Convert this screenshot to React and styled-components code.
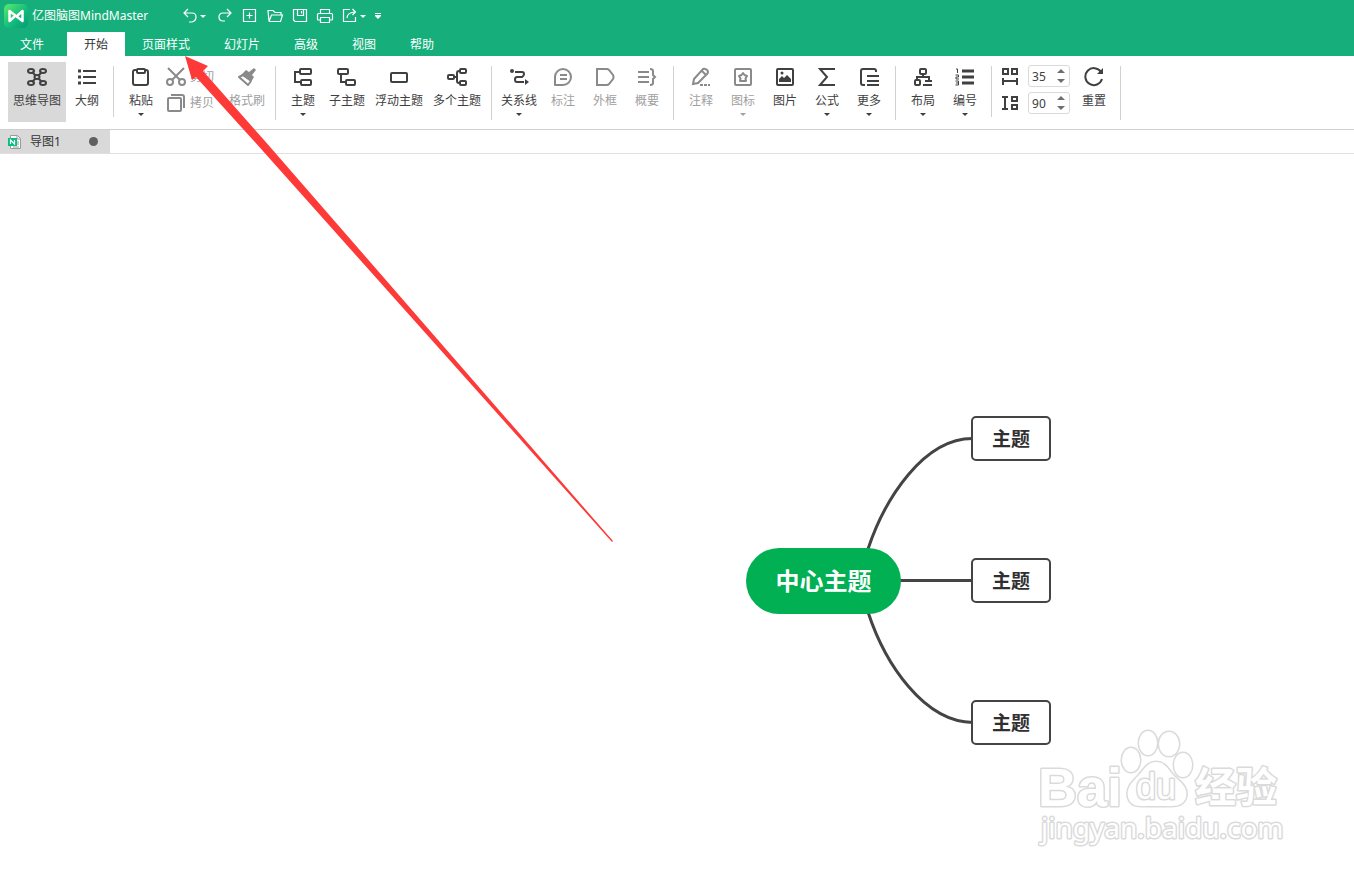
import React from "react";
import styled, { createGlobalStyle, css } from "styled-components";

const GlobalStyle = createGlobalStyle`
  * {
    box-sizing: border-box;
  }
  body {
    margin: 0;
    background: #ffffff;
    font-family: "Noto Sans", "Noto Sans CJK SC", sans-serif;
    font-size: 12px;
    line-height: 16px;
    color: #333333;
  }
  button, input {
    font: inherit;
    color: inherit;
    margin: 0;
    padding: 0;
    border: none;
    background: none;
  }
`;

const Window = styled.div`
  display: flex;
  flex-direction: column;
  min-height: 100vh;
  overflow: hidden;
`;

const Svg = styled.svg`
  display: block;
  flex: none;
  fill: none;
  stroke: currentColor;
  stroke-width: ${(p) => p.$weight || 2};
`;

/* title bar */
const TitleBar = styled.header`
  display: flex;
  align-items: center;
  height: 32px;
  padding-left: 4px;
  background: #16af7b;
  color: #ffffff;
`;

const AppName = styled.h1`
  flex: 0 0 148px;
  margin: 0 0 0 4px;
  font-size: 12px;
  font-weight: 400;
  line-height: 16px;
  white-space: nowrap;
`;

const QuickBar = styled.div`
  display: flex;
  align-items: center;
  gap: 5px;
`;

const QuickPair = styled.div`
  display: flex;
`;

const QuickButton = styled.button`
  display: flex;
  align-items: center;
  justify-content: ${(p) => (p.$narrow ? "flex-start" : "center")};
  width: ${(p) => (p.$narrow ? "10px" : "20px")};
  height: 20px;
`;

const Caret = styled.span`
  border: 3px solid transparent;
  border-top-color: currentColor;
  border-bottom: none;
`;

/* menu tabs */
const TabBar = styled.nav`
  display: flex;
  height: 24px;
  background: #16af7b;
`;

const Tab = styled.button`
  height: 24px;
  padding: 2px 17px 0;
  color: #ffffff;
  white-space: nowrap;
  ${(p) =>
    p.$file &&
    css`
      padding: 2px 20px 0;
      margin-right: 3px;
    `}
  ${(p) =>
    p.$active &&
    css`
      background: #ffffff;
      color: #333333;
    `}
`;

/* ribbon */
const Ribbon = styled.div`
  display: flex;
  height: 74px;
  padding: 6px 0 0 8px;
  border-bottom: 1px solid #d0d0d0;
`;

const Separator = styled.div`
  flex: none;
  width: 1px;
  height: ${(p) => (p.$short ? "51px" : "54px")};
  margin: 4px ${(p) => (p.$tight ? "4px" : "6px")} 0 5px;
  background: #d2d2d2;
`;

const Tool = styled.button`
  display: flex;
  flex: none;
  flex-direction: column;
  align-items: center;
  min-width: 42px;
  height: 60px;
  padding: 5px 5px 0;
  white-space: nowrap;
  background: ${(p) => (p.$active ? "#d9d9d9" : "transparent")};
  color: #404040;

  &:disabled {
    color: #8a8a8a;
  }
  &:disabled > span {
    color: #a0a0a0;
  }
`;

const ToolLabel = styled.span`
  margin: 6px 0 4px;
`;

const SmallTools = styled.div`
  display: flex;
  flex-direction: column;
  padding: 2px 10px 0 4px;
`;

const SmallTool = styled.button`
  display: flex;
  align-items: center;
  gap: 4px;
  height: 26px;
  white-space: nowrap;
  color: #8a8a8a;

  & > span {
    color: #a0a0a0;
  }
`;

const Spacing = styled.div`
  display: flex;
  flex-direction: column;
  gap: 5px;
  padding: 3px 3px 0 2px;
`;

const SpacingRow = styled.label`
  display: flex;
  align-items: center;
  gap: 8px;
  height: 22px;
  color: #404040;
`;

const Field = styled.span`
  display: flex;
  align-items: center;
  width: 42px;
  height: 22px;
  border: 1px solid #d9d9d9;
  border-radius: 3px;
`;

const FieldInput = styled.input`
  width: 28px;
  height: 20px;
  padding-left: 3px;
  outline: none;
`;

const Steps = styled.span`
  display: flex;
  flex-direction: column;
  justify-content: space-between;
  height: 16px;
  padding: 1px 0;
`;

const Step = styled.button`
  display: block;
  width: 8px;
  height: 4px;
  border: 4px solid transparent;
  border-top: ${(p) => (p.$up ? "none" : "4px solid #6e6e6e")};
  border-bottom: ${(p) => (p.$up ? "4px solid #6e6e6e" : "none")};
`;

/* document tabs */
const DocBar = styled.div`
  display: flex;
  height: 24px;
  border-bottom: 1px solid #e0e0e0;
`;

const DocTab = styled.button`
  display: flex;
  align-items: center;
  width: 110px;
  padding: 0 12px 0 7px;
  background: #d9d9d9;
`;

const DocName = styled.span`
  flex: 1;
  margin-left: 8px;
  text-align: left;
`;

const UnsavedDot = styled.span`
  width: 9px;
  height: 9px;
  border-radius: 50%;
  background: #606060;
`;

/* canvas */
const Canvas = styled.main`
  position: relative;
  flex: 1;
  min-height: 700px;
`;

const Links = styled.svg`
  position: absolute;
  left: 860px;
  top: 270px;
  fill: none;
  stroke: #444444;
  stroke-width: 3;
`;

const Node = styled.div`
  position: absolute;
  left: ${(p) => p.$x}px;
  top: ${(p) => p.$y}px;
  display: flex;
  align-items: center;
  justify-content: center;
  width: 80px;
  height: 45px;
  padding-bottom: 2px;
  border: 2px solid #444444;
  border-radius: 5px;
  background: #ffffff;
  color: #303030;
  font-family: "Noto Sans CJK SC", sans-serif;
  font-size: 19px;
  font-weight: 700;
`;

const CenterNode = styled(Node)`
  width: 155px;
  height: 66px;
  border: none;
  border-radius: 33px;
  background: #00b052;
  color: #ffffff;
  font-size: 24px;
`;

const Watermark = styled.svg`
  position: absolute;
  left: 1030px;
  top: 566px;
  fill: #ffffff;
  stroke: #dadada;
  stroke-width: 3;
  paint-order: stroke;
  stroke-linejoin: round;
`;

const Pointer = styled.svg`
  position: absolute;
  left: 180px;
  top: 50px;
  fill: #fd3a38;
  pointer-events: none;
`;

const icons = {
  mindmap: (
    <>
      <path d="M5 5L15 15M15 5L5 15" />
      <ellipse cx="4" cy="4" rx="3" ry="2" />
      <ellipse cx="16" cy="4" rx="3" ry="2" />
      <ellipse cx="4" cy="16" rx="3" ry="2" />
      <ellipse cx="16" cy="16" rx="3" ry="2" />
      <ellipse cx="10" cy="10" rx="2.500" ry="2" fill="#d9d9d9" />
    </>
  ),
  outline: (
    <>
      <path d="M6 4H19M6 10H19M6 16H19" />
      <path d="M1 4H4M1 10H4M1 16H4" strokeWidth="3" />
    </>
  ),
  paste: (
    <>
      <rect x="2" y="3" width="15" height="15" rx="2" />
      <rect x="6" y="2" width="8" height="4" rx="1" fill="#ffffff" />
    </>
  ),
  cut: (
    <>
      <circle cx="4" cy="15" r="3" />
      <circle cx="16" cy="15" r="3" />
      <path d="M2 1L14 13M18 1L6 13" />
    </>
  ),
  copy: (
    <>
      <rect x="2" y="5" width="13" height="13" rx="1" />
      <path d="M5 2H16Q18 2 18 4V15" />
    </>
  ),
  brush: (
    <>
      <path d="M6 8L2 10L11 18L14 14" strokeLinejoin="round" />
      <path d="M4 8L9 3L12 5L17 1L19 3L15 8L17 10L14 15Z" fill="currentColor" stroke="none" />
    </>
  ),
  topic: (
    <>
      <rect x="7" y="2" width="11" height="5" rx="1" />
      <rect x="8" y="13" width="10" height="5" rx="1" />
      <path d="M7 5H2V15H8" />
    </>
  ),
  subtopic: (
    <>
      <rect x="1" y="2" width="10" height="5" rx="1" />
      <rect x="9" y="13" width="9" height="5" rx="1" />
      <path d="M4 7V15H9" />
    </>
  ),
  floating: <rect x="2" y="6" width="16" height="9" rx="1" />,
  multi: (
    <>
      <rect x="1" y="8" width="6" height="4" rx="1" />
      <rect x="13" y="2" width="6" height="4" rx="1" />
      <rect x="13" y="14" width="6" height="4" rx="1" />
      <path d="M7 10H10M13 4H12Q10 4 10 6V14Q10 16 12 16H13" />
    </>
  ),
  relation: (
    <>
      <circle cx="3" cy="4" r="2" fill="currentColor" stroke="none" />
      <path d="M6 5H13Q15 5 15 7T13 10H8Q6 10 6 12.500T8 15H15" />
      <path d="M16 12L20 15L16 18Z" fill="currentColor" stroke="none" />
    </>
  ),
  callout: (
    <>
      <path d="M2 18V10A8 8 0 1 1 10 18Z" strokeLinejoin="round" />
      <path d="M7 8H14M7 12H14" />
    </>
  ),
  boundary: <path d="M2 2H12Q13 2 14 3L18 8Q19 10 18 12L14 17Q13 18 12 18H2Z" />,
  summary: (
    <path d="M1 5H12M1 10H12M1 15H12M13 2Q16 2 16 4V8L18 10L16 12V16Q16 18 13 18" />
  ),
  note: (
    <>
      <path d="M2 17L3 12L12 2Q14 1 16 3T16 7L7 16Z M11 4L15 8" />
      <path d="M9 18H19" strokeDasharray="3 1" />
    </>
  ),
  mark: (
    <>
      <rect x="2" y="2" width="16" height="16" rx="1" />
      <path d="M10 6L11.500 8L14 9L12.500 11.500L13 14H7L7.500 11.500L6 9L8.500 8Z" strokeLinejoin="round" />
    </>
  ),
  picture: (
    <>
      <rect x="2" y="2" width="16" height="16" rx="1" />
      <path d="M4 15V12L7 9L9 11L12 8L16 12V15Z" fill="currentColor" stroke="none" />
      <circle cx="7" cy="6" r="1.500" fill="currentColor" stroke="none" />
    </>
  ),
  formula: <path d="M18 2H3L10 10L3 18H18" />,
  more: <path d="M17 5V4Q17 2 15 2H4Q2 2 2 4V16Q2 18 4 18H6M8 9H20M8 14H20M8 18H20" />,
  layout: (
    <>
      <rect x="7" y="2" width="6" height="5" rx="1" />
      <rect x="2" y="13" width="5" height="5" rx="1" />
      <path d="M10 7V10M4 13V10H16V14M12 14H19M10 18H19" />
    </>
  ),
  numbering: (
    <>
      <path d="M7 4H19M7 10H19M7 16H19" strokeWidth="3" />
      <path d="M1 2H2.500V6M0.500 8H3.500V10H1V12H4M0.500 14H3.500V18H0.500M1 16H3" strokeWidth="1" />
    </>
  ),
  reset: (
    <>
      <path d="M17 5A8.500 8.500 0 1 0 18 12" />
      <path d="M19 1V7H13Z" fill="currentColor" stroke="none" />
    </>
  ),
  hgap: (
    <path d="M3 3H8V8H3ZM12 3H17V8H12ZM3 12V19M17 12V19M3 15H17" />
  ),
  vgap: (
    <path d="M12 4H17V8H12ZM12 12H17V16H12ZM2 4H8M2 16H8M5 4V16" />
  ),
};

const quick = {
  undo: <path d="M8 3L4 7L8 11M4 7H12Q16 7 16 11T12 16H9" />,
  redo: <path d="M12 3L16 7L12 11M16 7H8Q4 7 4 11T8 15H10" />,
  add: <path d="M3.500 3.500H15.500V15.500H3.500ZM6.500 9.500H12.500M9.500 6.500V12.500" />,
  open: <path d="M4 15.500L3 4.500H8L10 6.500H16V9M4 15.500H15.500L17.500 9H6.500L4 15.500" />,
  save: <path d="M4 3.500H16.500V15.500H5L3.500 14V3.500ZM7.500 3.500V9.500H13.500V3.500M11.500 5V7.500" />,
  print: <path d="M5.500 7V3.500H14.500V7M5.500 14H3.500Q2.500 14 2.500 13V8.500Q2.500 7.500 3.500 7.500H16.500Q17.500 7.500 17.500 8.500V13Q17.500 14 16.500 14H14.500M5.500 11.500H14.500V16.500H5.500Z" />,
  share: <path d="M10 3.500H3.500V15.500H15.500V11M7 12Q7 6.500 15.500 6M12.500 3L15.500 6L12.500 9" />,
};

const Icon = ({ name }) => (
  <Svg width="20" height="20" viewBox="0 0 20 20" aria-hidden="true">
    {icons[name]}
  </Svg>
);

const QuickIcon = ({ name }) => (
  <Svg $weight={1.2} width="20" height="20" viewBox="0 0 20 20" aria-hidden="true">
    {quick[name]}
  </Svg>
);

const ToolItem = ({ icon, label, menu, ...rest }) => (
  <Tool {...rest}>
    <Icon name={icon} />
    <ToolLabel>{label}</ToolLabel>
    {menu && <Caret />}
  </Tool>
);

const SpacingItem = ({ icon, label, value }) => (
  <SpacingRow>
    <Icon name={icon} />
    <Field>
      <FieldInput type="text" inputMode="numeric" aria-label={label} defaultValue={value} />
      <Steps>
        <Step $up aria-label="+" />
        <Step aria-label="-" />
      </Steps>
    </Field>
  </SpacingRow>
);

const tabs = ["开始", "页面样式", "幻灯片", "高级", "视图", "帮助"];

const topics = [262, 404, 546];

const App = () => {
  return (
    <Window>
      <GlobalStyle />
      <TitleBar>
        <svg width="24" height="24" viewBox="0 0 24 24" aria-hidden="true">
          <defs>
            <linearGradient id="logo" x1="0" y1="0" x2="1" y2="1">
              <stop offset="0" stopColor="#5bea6c" />
              <stop offset="0.6" stopColor="#10b97c" />
              <stop offset="1" stopColor="#079b73" />
            </linearGradient>
          </defs>
          <rect width="24" height="24" rx="5" fill="url(#logo)" />
          <path d="M10 13L5.500 17V7L18.500 17V7L14 11" fill="none" stroke="#ffffff" strokeWidth="2.500" strokeLinejoin="round" strokeLinecap="round" />
        </svg>
        <AppName>亿图脑图MindMaster</AppName>
        <QuickBar>
          <QuickPair>
            <QuickButton aria-label="撤销"><QuickIcon name="undo" /></QuickButton>
            <QuickButton $narrow aria-label="撤销列表"><Caret /></QuickButton>
          </QuickPair>
          <QuickButton aria-label="恢复"><QuickIcon name="redo" /></QuickButton>
          <QuickButton aria-label="新建"><QuickIcon name="add" /></QuickButton>
          <QuickButton aria-label="打开"><QuickIcon name="open" /></QuickButton>
          <QuickButton aria-label="保存"><QuickIcon name="save" /></QuickButton>
          <QuickButton aria-label="打印"><QuickIcon name="print" /></QuickButton>
          <QuickPair>
            <QuickButton aria-label="分享"><QuickIcon name="share" /></QuickButton>
            <QuickButton $narrow aria-label="分享列表"><Caret /></QuickButton>
          </QuickPair>
          <QuickButton $narrow aria-label="自定义">
            <Svg $weight={1} width="6" height="8" viewBox="0 0 6 8">
              <path d="M0 1.500H6M0 3.500H6" />
              <path d="M0 4H6L3 7Z" fill="currentColor" stroke="none" />
            </Svg>
          </QuickButton>
        </QuickBar>
      </TitleBar>

      <TabBar>
        <Tab $file>文件</Tab>
        {tabs.map((tab) => (
          <Tab key={tab} $active={tab === "开始"}>{tab}</Tab>
        ))}
      </TabBar>

      <Ribbon>
        <ToolItem icon="mindmap" label="思维导图" $active />
        <ToolItem icon="outline" label="大纲" />
        <Separator $short />
        <ToolItem icon="paste" label="粘贴" menu />
        <SmallTools>
          <SmallTool disabled><Icon name="cut" /><span>剪切</span></SmallTool>
          <SmallTool disabled><Icon name="copy" /><span>拷贝</span></SmallTool>
        </SmallTools>
        <ToolItem icon="brush" label="格式刷" disabled />
        <Separator />
        <ToolItem icon="topic" label="主题" menu />
        <ToolItem icon="subtopic" label="子主题" />
        <ToolItem icon="floating" label="浮动主题" />
        <ToolItem icon="multi" label="多个主题" />
        <Separator $tight />
        <ToolItem icon="relation" label="关系线" menu />
        <ToolItem icon="callout" label="标注" disabled />
        <ToolItem icon="boundary" label="外框" disabled />
        <ToolItem icon="summary" label="概要" disabled />
        <Separator />
        <ToolItem icon="note" label="注释" disabled />
        <ToolItem icon="mark" label="图标" menu disabled />
        <ToolItem icon="picture" label="图片" />
        <ToolItem icon="formula" label="公式" menu />
        <ToolItem icon="more" label="更多" menu />
        <Separator />
        <ToolItem icon="layout" label="布局" menu />
        <ToolItem icon="numbering" label="编号" menu />
        <Separator $short />
        <Spacing>
          <SpacingItem icon="hgap" label="水平间距" value="35" />
          <SpacingItem icon="vgap" label="垂直间距" value="90" />
        </Spacing>
        <ToolItem icon="reset" label="重置" />
        <Separator />
      </Ribbon>

      <DocBar>
        <DocTab>
          <svg width="15" height="14" viewBox="0 0 15 14" aria-hidden="true">
            <path d="M3.500 3V0.500H10.500L13.500 3.500V13.500H3.500V11" fill="#ffffff" stroke="#9a9a9a" />
            <path d="M10 1V4H13M10 7H12M10 9H12M6 12H12" fill="none" stroke="#9a9a9a" />
            <rect x="1" y="3" width="9" height="8" fill="#06bf80" />
            <path d="M3.500 9V5L7.500 9V5" fill="none" stroke="#ffffff" strokeWidth="1.200" />
          </svg>
          <DocName>导图1</DocName>
          <UnsavedDot />
        </DocTab>
      </DocBar>

      <Canvas>
        <Links width="120" height="320" viewBox="860 424 120 320">
          <path d="M868 549C885 498 924 438 973 438.500M900 580.500H973M868 612C885 664 924 722 973 722.500" />
        </Links>
        <CenterNode $x={746} $y={394}>中心主题</CenterNode>
        {topics.map((y) => (
          <Node key={y} $x={971} $y={y}>主题</Node>
        ))}

        <Watermark width="270" height="140" viewBox="1030 720 270 140">
          <text x="1038" y="806" fontFamily="Liberation Sans" fontWeight="700" fontSize="54">Bai</text>
          <ellipse cx="1131" cy="760" rx="9" ry="12" />
          <ellipse cx="1148" cy="743" rx="9" ry="12" />
          <ellipse cx="1169" cy="744" rx="10" ry="12" />
          <ellipse cx="1183" cy="765" rx="9" ry="12" />
          <path d="M1156 762C1166 762 1168 770 1175 777C1183 784 1188 789 1186 797C1183 808 1173 806 1156 806C1139 806 1131 808 1128 797C1126 788 1132 782 1139 775C1145 768 1148 762 1156 762Z" />
          <text x="1136" y="799" fontFamily="Liberation Sans" fontWeight="400" fontSize="36">du</text>
          <text x="1195" y="802" fontFamily="Noto Sans CJK SC" fontWeight="700" fontSize="41">经验</text>
          <text x="1041" y="838" fontFamily="Noto Sans" fontWeight="400" fontSize="28">jingyan.baidu.com</text>
        </Watermark>
      </Canvas>

      <Pointer width="440" height="500" viewBox="180 50 440 500" aria-hidden="true">
        <path d="M185 56L208 66L203 71L264 140L613 541L612 542L253 140L196 77L192 80Z" />
      </Pointer>
    </Window>
  );
};

export default App;
